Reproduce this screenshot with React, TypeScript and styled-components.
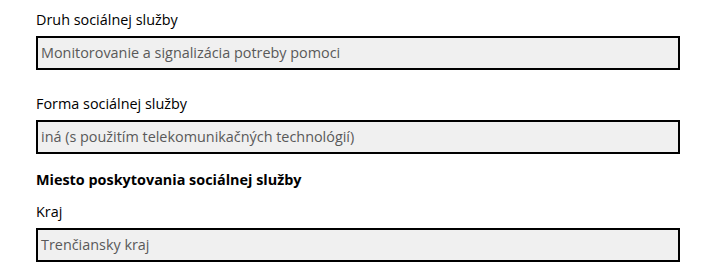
import React from "react";
import styled, { createGlobalStyle } from "styled-components";

const Global = createGlobalStyle`
  html, body { margin: 0; padding: 0; background: #ffffff; }
  body { font-family: "Open Sans", "Noto Sans", Arial, sans-serif; color: #000; }
`;

const Page = styled.div`
  width: 644px;
  padding: 10px 0 0 36px;
  display: flex;
  flex-direction: column;
`;

const Field = styled.div<{ $gap?: number }>`
  display: flex;
  flex-direction: column;
  margin-bottom: ${(p) => p.$gap ?? 0}px;
`;

const Label = styled.label`
  font-size: 14.4px;
  line-height: 20px;
  margin-bottom: 6px;
  color: #000;
`;

const Heading = styled.div`
  font-size: 14.4px;
  font-weight: 700;
  line-height: 20px;
  margin-bottom: 12px;
`;

const ReadBox = styled.div`
  box-sizing: border-box;
  height: 34px;
  border: 2px solid #000;
  background: #f0f0f0;
  color: #595959;
  font-size: 14.4px;
  line-height: 20px;
  padding: 5px 3px;
  white-space: nowrap;
`;

export default function App() {
  return (
    <>
      <Global />
      <Page>
        <Field $gap={24}>
          <Label>Druh sociálnej služby</Label>
          <ReadBox>Monitorovanie a signalizácia potreby pomoci</ReadBox>
        </Field>
        <Field $gap={16}>
          <Label>Forma sociálnej služby</Label>
          <ReadBox>iná (s použitím telekomunikačných technológií)</ReadBox>
        </Field>
        <Heading>Miesto poskytovania sociálnej služby</Heading>
        <Field>
          <Label>Kraj</Label>
          <ReadBox>Trenčiansky kraj</ReadBox>
        </Field>
      </Page>
    </>
  );
}
